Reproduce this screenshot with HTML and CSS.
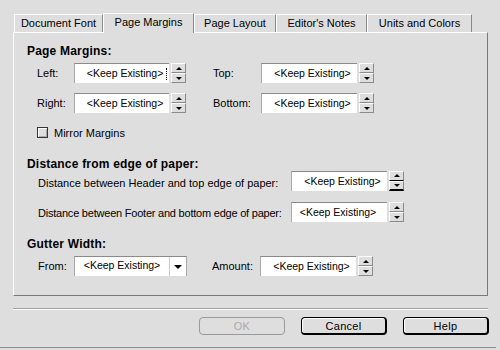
FILE: index.html
```html
<!DOCTYPE html>
<html lang="en">
<head>
    <meta charset="UTF-8">
    <title>Document Settings</title>
    <link rel="stylesheet" href="styles.css">
</head>
<body>
    <div class="window">
        <!-- Tabs -->
        <div class="tabs">
            <div class="tab">Document Font</div>
            <div class="tab active">Page Margins</div>
            <div class="tab">Page Layout</div>
            <div class="tab">Editor's Notes</div>
            <div class="tab">Units and Colors</div>
        </div>

        <div class="panel">
            <h2>Page Margins:</h2>
            <div class="margin-grid">
                <span class="label">Left:</span>
                <div class="stepper">
                    <div class="field">&lt;Keep Existing&gt;<span class="caret"></span></div>
                    <div class="spin"><span class="up"></span><span class="down"></span></div>
                </div>
                <span></span>
                <span class="label">Top:</span>
                <div class="stepper">
                    <div class="field">&lt;Keep Existing&gt;</div>
                    <div class="spin"><span class="up"></span><span class="down"></span></div>
                </div>

                <span class="label">Right:</span>
                <div class="stepper">
                    <div class="field">&lt;Keep Existing&gt;</div>
                    <div class="spin"><span class="up"></span><span class="down"></span></div>
                </div>
                <span></span>
                <span class="label">Bottom:</span>
                <div class="stepper">
                    <div class="field">&lt;Keep Existing&gt;</div>
                    <div class="spin"><span class="up"></span><span class="down"></span></div>
                </div>
            </div>
            <div class="check"><span class="box"></span>Mirror Margins</div>

            <h2 class="section">Distance from edge of paper:</h2>
            <div class="dist-row">
                <span class="label">Distance between Header and top edge of paper:</span>
                <div class="stepper">
                    <div class="field">&lt;Keep Existing&gt;</div>
                    <div class="spin pressed"><span class="up"></span><span class="down"></span></div>
                </div>
            </div>
            <div class="dist-row second">
                <span class="label">Distance between Footer and bottom edge of paper:</span>
                <div class="stepper">
                    <div class="field plain">&lt;Keep Existing&gt;</div>
                    <div class="spin"><span class="up"></span><span class="down"></span></div>
                </div>
            </div>

            <h2 class="section gutter">Gutter Width:</h2>
            <div class="gutter-row">
                <span class="label">From:</span>
                <div class="popup">
                    <span class="popup-text">&lt;Keep Existing&gt;</span>
                    <span class="popup-arrow"><span class="down"></span></span>
                </div>
                <span></span>
                <span class="label">Amount:</span>
                <div class="stepper">
                    <div class="field">&lt;Keep Existing&gt;</div>
                    <div class="spin"><span class="up"></span><span class="down"></span></div>
                </div>
            </div>
        </div>

        <div class="separator"></div>

        <div class="buttons">
            <button class="btn" disabled>OK</button>
            <button class="btn">Cancel</button>
            <button class="btn">Help</button>
        </div>
    </div>
</body>
</html>
```

FILE: styles.css
```css
body {
    margin: 0;
    padding: 0;
    background-color: #dedede;
    font-family: "Liberation Sans", Arial, sans-serif;
    font-size: 11px;
    color: #000;
}
.window {
    width: 498px;
    height: 348px;
    padding: 13px 0 0 13px;
    box-sizing: border-box;
    border-left: 2px solid #eeeeee;
    border-bottom: 1px solid #8a8a8a;
    margin-left: -2px;
}
.tabs {
    display: flex;
    height: 19px;
    margin-left: 1px;
    position: relative;
    z-index: 1;
}
.tab {
    box-sizing: border-box;
    height: 18px;
    margin-top: 1px;
    border-top: 1px solid #fff;
    border-left: 1px solid #fff;
    border-right: 1px solid #8a8a8a;
    text-align: center;
    line-height: 17px;
    font-size: 11px;
}
.tab:nth-child(1) { width: 89px; }
.tab:nth-child(2) { width: 91px; }
.tab:nth-child(3) { width: 82px; }
.tab:nth-child(4) { width: 91px; }
.tab:nth-child(5) { width: 105px; }
.tab.active {
    height: 20px;
    margin-top: 0;
    line-height: 16px;
    background-color: #dedede;
}
.panel {
    box-sizing: border-box;
    width: 475px;
    height: 264px;
    border-top: 1px solid #fff;
    border-left: 1px solid #fff;
    border-right: 1px solid #7a7a7a;
    border-bottom: 1px solid #7a7a7a;
    padding: 11px 0 0 13px;
}
h2 {
    margin: 0;
    font-size: 12px;
    font-weight: bold;
    line-height: 14px;
    letter-spacing: 0.2px;
}
.label {
    white-space: nowrap;
}
.margin-grid {
    display: grid;
    grid-template-columns: 37px 112px 27px 48px 116px;
    row-gap: 10px;
    align-items: center;
    margin: 5px 0 0 10px;
}
.stepper {
    display: flex;
    align-items: flex-start;
    gap: 2px;
}
.field {
    box-sizing: border-box;
    width: 96px;
    height: 20px;
    padding-left: 6px;
    background-color: #fff;
    border-top: 1px solid #8a8a8a;
    border-left: 1px solid #aaa;
    text-align: center;
    line-height: 18px;
    font-size: 10.5px;
    position: relative;
}
.field.plain {
    padding-left: 0;
    padding-right: 3px;
}
.caret {
    position: absolute;
    right: 2px;
    top: 4px;
    height: 12px;
    border-left: 1px dotted #000;
}
.spin {
    display: flex;
    flex-direction: column;
    width: 15px;
    height: 20px;
}
.spin span {
    box-sizing: border-box;
    flex: 1;
    display: flex;
    align-items: center;
    justify-content: center;
    border-top: 1px solid #fff;
    border-left: 1px solid #fff;
    border-right: 1px solid #8a8a8a;
    border-bottom: 1px solid #8a8a8a;
}
.up::before,
.down::before {
    content: "";
    display: block;
    width: 0;
    height: 0;
    border-left: 3px solid transparent;
    border-right: 3px solid transparent;
}
.up::before {
    border-bottom: 3px solid #000;
}
.down::before {
    border-top: 3px solid #000;
}
.spin.pressed span {
    border-bottom-color: #000;
}
.spin.pressed .down {
    border-bottom-width: 2px;
}
.check {
    display: flex;
    align-items: center;
    gap: 6px;
    margin: 14px 0 0 10px;
    height: 11px;
    font-size: 11px;
}
.box {
    box-sizing: border-box;
    width: 11px;
    height: 11px;
    border: 1px solid #333;
    box-shadow: inset 1px 1px 0 #fff, inset -1px -1px 0 #aaa;
}
.section {
    margin-top: 19px;
}
.section.gutter {
    margin-top: 15px;
}
.dist-row {
    display: grid;
    grid-template-columns: 253px auto;
    align-items: center;
    margin-left: 11px;
}
.dist-row .label {
    padding-top: 4px;
}
.dist-row.second {
    margin-top: 11px;
}
.dist-row.second .label {
    padding-top: 2px;
    letter-spacing: -0.22px;
}
.gutter-row {
    display: grid;
    grid-template-columns: 36px 113px 25px 48px 116px;
    align-items: center;
    margin: 5px 0 0 11px;
}
.popup {
    box-sizing: border-box;
    display: flex;
    width: 113px;
    height: 20px;
    background-color: #fff;
    border-top: 1px solid #8a8a8a;
    border-left: 1px solid #aaa;
    border-right: 1px solid #aaa;
}
.popup-text {
    flex: 1;
    text-align: center;
    line-height: 16px;
    font-size: 10.5px;
}
.popup-arrow {
    width: 16px;
    display: flex;
    align-items: center;
    justify-content: center;
    border-left: 1px solid #ccc;
}
.popup-arrow .down::before {
    border-left-width: 4px;
    border-right-width: 4px;
    border-top-width: 4px;
}
.separator {
    width: 475px;
    height: 0;
    margin-top: 12px;
    border-top: 1px solid #a0a0a0;
    border-bottom: 1px solid #fff;
}
.buttons {
    display: flex;
    justify-content: flex-end;
    gap: 16px;
    width: 475px;
    margin-top: 7px;
}
.btn {
    box-sizing: border-box;
    width: 86px;
    height: 18px;
    padding: 0;
    background-color: #dedede;
    border: 1px solid #000;
    border-right-width: 2px;
    border-bottom-width: 2px;
    border-radius: 4px;
    box-shadow: inset 1px 1px 0 #fff;
    font-family: "Liberation Sans", Arial, sans-serif;
    font-size: 11px;
    letter-spacing: 0.3px;
    color: #000;
}
.btn:disabled {
    border: 1px solid #9a9a9a;
    box-shadow: none;
    color: #aaa;
}
.buttons .btn:last-child {
    margin-right: -1px;
}
```
